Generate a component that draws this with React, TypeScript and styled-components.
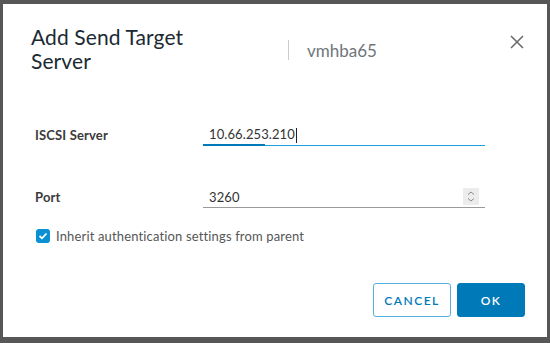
import React from 'react';
import styled, {createGlobalStyle} from 'styled-components';

const GlobalStyle = createGlobalStyle`
  html, body {
    margin: 0;
    padding: 0;
    background: #575757;
    font-family: Lato, "Open Sans", "Liberation Sans", sans-serif;
  }
  #root {
    padding: 4px 3px 6px 3px;
  }
`;

const Dialog = styled.div`
  width: 544px;
  height: 333px;
  background: #ffffff;
  box-sizing: border-box;
  display: flex;
  flex-direction: column;
  padding: 21px 22px 20px 0;
`;

const Header = styled.div`
  display: flex;
  align-items: center;
  padding-left: 28px;
`;

const Title = styled.h3`
  margin: 0;
  width: 257px;
  font-size: 21px;
  line-height: 24px;
  font-weight: 400;
  letter-spacing: 0.1px;
  color: #1b2a32;
`;

const HeaderDivider = styled.span`
  width: 1px;
  height: 20px;
  margin-top: 2px;
  background: #cccccc;
`;

const Subtitle = styled.span`
  margin-left: 18px;
  margin-top: 3px;
  font-size: 17px;
  color: #6f757b;
  flex: 1;
`;

const CloseButton = styled.button`
  align-self: flex-start;
  margin-top: 9px;
  border: none;
  background: transparent;
  padding: 0;
  width: 16px;
  height: 16px;
  cursor: pointer;
  display: flex;
`;

const Form = styled.div`
  display: flex;
  flex-direction: column;
  padding-left: 32px;
  margin-top: 51px;
`;

const FormRow = styled.div<{gap?: number}>`
  display: grid;
  grid-template-columns: 168px 282px;
  align-items: center;
  height: 22px;
  margin-top: ${(p) => p.gap ?? 0}px;
`;

const Label = styled.label`
  font-size: 13px;
  font-weight: 700;
  letter-spacing: 0.15px;
  color: #3a3a3a;
`;

const InputWrap = styled.div<{focused?: boolean}>`
  position: relative;
  height: 22px;
  box-sizing: border-box;
  display: flex;
  align-items: center;
  padding-left: 6px;
  border-bottom: 1px solid ${(p) => (p.focused ? '#1a9fd9' : '#9a9a9a')};
`;

const Value = styled.span`
  font-size: 13px;
  letter-spacing: 0.1px;
  color: #333333;
`;

const Caret = styled.span`
  display: inline-block;
  width: 1px;
  height: 15px;
  background: #222;
  vertical-align: middle;
  margin-left: 1px;
`;

const FocusBar = styled.span`
  position: absolute;
  left: 0;
  bottom: -1px;
  width: 62px;
  height: 2px;
  background: #0079b8;
`;

const Spinner = styled.span`
  margin-left: auto;
  margin-right: 6px;
  width: 16px;
  height: 17px;
  background: #ececec;
  display: flex;
  align-items: center;
  justify-content: center;
`;

const CheckRow = styled.label`
  display: flex;
  align-items: center;
  margin-top: 20px;
  padding-left: 1px;
  gap: 6px;
  font-size: 13px;
  letter-spacing: 0.15px;
  color: #565656;
`;

const CheckBox = styled.span`
  width: 14px;
  height: 14px;
  border-radius: 3px;
  background: #0a91d3;
  display: flex;
  align-items: center;
  justify-content: center;
`;

const Footer = styled.div`
  margin-top: auto;
  display: flex;
  justify-content: flex-end;
  gap: 6px;
`;

const Button = styled.button<{primary?: boolean}>`
  height: 34px;
  width: ${(p) => (p.primary ? 68 : 78)}px;
  box-sizing: border-box;
  border-radius: 3px;
  border: 1px solid ${(p) => (p.primary ? '#0079b8' : '#5aaee0')};
  background: ${(p) => (p.primary ? '#0079b8' : '#ffffff')};
  color: ${(p) => (p.primary ? '#ffffff' : '#0079b8')};
  font-family: Lato, "Open Sans", sans-serif;
  font-size: 12px;
  font-weight: 600;
  letter-spacing: 1.5px;
  padding: 0;
`;

export default function App() {
  return (
    <>
      <GlobalStyle />
      <Dialog>
        <Header>
          <Title>
            Add Send Target
            <br />
            Server
          </Title>
          <HeaderDivider />
          <Subtitle>vmhba65</Subtitle>
          <CloseButton aria-label="Close">
            <svg width="16" height="16" viewBox="0 0 16 16">
              <path d="M2 2 L14 14 M14 2 L2 14" stroke="#666" strokeWidth="1.5" fill="none" />
            </svg>
          </CloseButton>
        </Header>
        <Form>
          <FormRow>
            <Label>ISCSI Server</Label>
            <InputWrap focused>
              <Value>
                10.66.253.210
                <Caret />
              </Value>
              <FocusBar />
            </InputWrap>
          </FormRow>
          <FormRow gap={40}>
            <Label>Port</Label>
            <InputWrap>
              <Value>3260</Value>
              <Spinner>
                <svg width="10" height="13" viewBox="0 0 10 13">
                  <path d="M2 4.5 L5 2 L8 4.5 M2 8.5 L5 11 L8 8.5" stroke="#8a8a8a" strokeWidth="1" fill="none" />
                </svg>
              </Spinner>
            </InputWrap>
          </FormRow>
          <CheckRow>
            <CheckBox>
              <svg width="10" height="8" viewBox="0 0 10 8">
                <path d="M1.5 4 L4 6.3 L8.5 1.5" stroke="#fff" strokeWidth="1.8" fill="none" />
              </svg>
            </CheckBox>
            Inherit authentication settings from parent
          </CheckRow>
        </Form>
        <Footer>
          <Button>CANCEL</Button>
          <Button primary>OK</Button>
        </Footer>
      </Dialog>
    </>
  );
}
